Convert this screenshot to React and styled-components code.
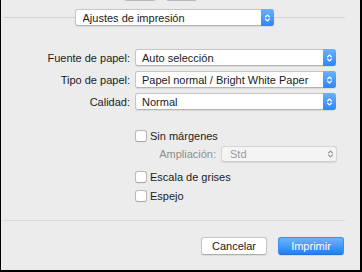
import React from "react";
import styled, { createGlobalStyle } from "styled-components";

const Global = createGlobalStyle`
  html, body { margin: 0; padding: 0; background: #ececec; }
  * { box-sizing: border-box; }
`;

const Frame = styled.div`
  width: 362px;
  height: 272px;
  background: #ececec;
  border-left: 1px solid #000;
  border-right: 2px solid #000;
  border-bottom: 2px solid #000;
  display: flex;
  flex-direction: column;
  font-family: "Liberation Sans", Arial, sans-serif;
  font-size: 11px;
  color: #1b1b1b;
  overflow: hidden;
`;

const Stubs = styled.div`
  display: flex;
  gap: 10px;
  height: 3px;
  padding-left: 123px;
`;

const Stub = styled.div`
  width: ${(p) => p.$w}px;
  height: 3px;
  margin-top: -2px;
  background: #fff;
  border: 1px solid #b9b9b9;
  border-radius: 0 0 2px 2px;
`;

const Header = styled.div`
  display: flex;
  align-items: center;
  margin-top: 6px;
  padding: 0 15px 0 2px;
  height: 17px;
`;

const Rule = styled.div`
  flex: 1;
  height: 1px;
  background: #d5d5d5;
`;

const Popup = styled.div`
  width: ${(p) => p.$w}px;
  height: ${(p) => p.$h || 17}px;
  display: flex;
  align-items: center;
  background: ${(p) => (p.$disabled ? "#f4f4f4" : "#fff")};
  border: 1px solid ${(p) => (p.$disabled ? "#d6d6d6" : "#c6c6c6")};
  border-bottom-color: ${(p) => (p.$disabled ? "#cfcfcf" : "#b4b4b4")};
  border-radius: 3px;
  box-shadow: 0 0.5px 1px rgba(0, 0, 0, 0.08);
  color: ${(p) => (p.$disabled ? "#9a9a9a" : "#1b1b1b")};
  padding-left: ${(p) => p.$pad || 6}px;
  position: relative;
  flex: none;
`;

const PopupText = styled.span`
  flex: 1;
  white-space: nowrap;
  overflow: hidden;
`;

const Stepper = styled.div`
  width: 13px;
  height: calc(100% + 2px);
  margin: -1px -1px -1px 0;
  border-radius: 0 3px 3px 0;
  background: ${(p) =>
    p.$disabled ? "transparent" : "linear-gradient(#6ab2fb, #2f86f6)"};
  display: flex;
  align-items: center;
  justify-content: center;
  flex: none;
`;

const Chevrons = ({ color }) => (
  <svg width="7" height="10" viewBox="0 0 7 10">
    <path
      d="M1.5 4 L3.5 2 L5.5 4 M1.5 6 L3.5 8 L5.5 6"
      fill="none"
      stroke={color}
      strokeWidth="1.1"
      strokeLinecap="round"
      strokeLinejoin="round"
    />
  </svg>
);

const Form = styled.div`
  display: grid;
  grid-template-columns: 129px 201px;
  column-gap: 5px;
  row-gap: 5px;
  margin-top: 23px;
`;

const Label = styled.div`
  text-align: right;
  align-self: center;
  white-space: nowrap;
  color: ${(p) => (p.$muted ? "#8e8e8e" : "#1b1b1b")};
`;

const Options = styled.div`
  display: flex;
  flex-direction: column;
  gap: 2px;
  margin-top: 17px;
  padding-left: 134px;
`;

const CheckRow = styled.label`
  display: flex;
  align-items: center;
  gap: 3px;
  height: 17px;
  margin-top: ${(p) => (p.$spaced ? 4 : 0)}px;
`;

const Box = styled.span`
  width: 12px;
  height: 12px;
  background: #fff;
  border: 1px solid #b9b9b9;
  border-bottom-color: #a9a9a9;
  border-radius: 3px;
  box-shadow: 0 0.5px 0.5px rgba(0, 0, 0, 0.06);
  flex: none;
`;

const SubRow = styled.div`
  display: flex;
  align-items: center;
  gap: 5px;
  height: 16px;
`;

const SubLabel = styled(Label)`
  width: 81px;
`;

const BottomRule = styled.div`
  height: 1px;
  background: #dadada;
  margin: 16px 15px 0 0;
`;

const Buttons = styled.div`
  display: flex;
  justify-content: flex-end;
  gap: 11px;
  margin-top: 16px;
  padding-right: 16px;
`;

const Button = styled.div`
  width: ${(p) => p.$w}px;
  height: 18px;
  display: flex;
  align-items: center;
  justify-content: center;
  border-radius: 3px;
  background: ${(p) =>
    p.$primary ? "linear-gradient(#6cb4fb, #1f80f7)" : "#fff"};
  color: ${(p) => (p.$primary ? "#fff" : "#1b1b1b")};
  border: 1px solid ${(p) => (p.$primary ? "#3d8ef5" : "#c6c6c6")};
  border-bottom-color: ${(p) => (p.$primary ? "#1f72e0" : "#b0b0b0")};
  box-shadow: 0 0.5px 1px rgba(0, 0, 0, 0.08);
`;

export default function App() {
  return (
    <>
      <Global />
      <Frame>
        <Stubs>
          <Stub $w={32} />
          <Stub $w={31} />
        </Stubs>
        <Header>
          <Rule />
          <Popup $w={199} $pad={7}>
            <PopupText>Ajustes de impresión</PopupText>
            <Stepper>
              <Chevrons color="#fff" />
            </Stepper>
          </Popup>
          <Rule />
        </Header>
        <Form>
          <Label>Fuente de papel:</Label>
          <Popup $w={201}>
            <PopupText>Auto selección</PopupText>
            <Stepper>
              <Chevrons color="#fff" />
            </Stepper>
          </Popup>
          <Label>Tipo de papel:</Label>
          <Popup $w={201}>
            <PopupText>Papel normal / Bright White Paper</PopupText>
            <Stepper>
              <Chevrons color="#fff" />
            </Stepper>
          </Popup>
          <Label>Calidad:</Label>
          <Popup $w={201}>
            <PopupText>Normal</PopupText>
            <Stepper>
              <Chevrons color="#fff" />
            </Stepper>
          </Popup>
        </Form>
        <Options>
          <CheckRow>
            <Box />
            Sin márgenes
          </CheckRow>
          <SubRow>
            <SubLabel $muted>Ampliación:</SubLabel>
            <Popup $w={116} $h={16} $pad={8} $disabled>
              <PopupText>Std</PopupText>
              <Stepper $disabled>
                <Chevrons color="#9a9a9a" />
              </Stepper>
            </Popup>
          </SubRow>
          <CheckRow $spaced>
            <Box />
            Escala de grises
          </CheckRow>
          <CheckRow>
            <Box />
            Espejo
          </CheckRow>
        </Options>
        <BottomRule />
        <Buttons>
          <Button $w={66}>Cancelar</Button>
          <Button $w={66} $primary>
            Imprimir
          </Button>
        </Buttons>
      </Frame>
    </>
  );
}
